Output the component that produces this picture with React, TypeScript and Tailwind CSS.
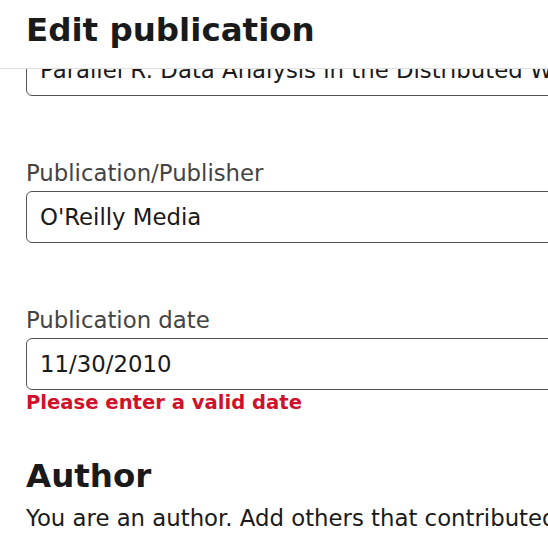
function TextInput({ value }: { value: string }) {
  return (
    <input
      readOnly
      value={value}
      className="box-border block h-[52px] w-[640px] rounded-[6px] border border-[#555] bg-white px-[13px] text-[22.8px] text-[#1a1a1a] outline-none"
    />
  );
}

function Field({
  label,
  value,
  error,
}: {
  label: string;
  value: string;
  error?: string;
}) {
  return (
    <div className="mt-[63px]">
      <label className="mb-[4px] block text-[22.8px] leading-[28px] text-[#444]">
        {label}
      </label>
      <TextInput value={value} />
      {error && (
        <p className="pt-[1px] text-[19.6px] leading-[24px] font-bold text-[#d0112b]">
          {error}
        </p>
      )}
    </div>
  );
}

export default function App() {
  return (
    <div className="relative h-[547px] w-[548px] overflow-hidden bg-white font-['DejaVu_Sans',sans-serif] text-[#1a1a1a]">
      <header className="absolute inset-x-0 top-0 z-10 box-border h-[69px] border-b border-[#e0e0e0] bg-white px-[26px] pt-[10px]">
        <h1 className="text-[32.5px] leading-[40px] font-bold">Edit publication</h1>
      </header>

      <main className="px-[26px] pt-[44px]">
        <TextInput value="Parallel R: Data Analysis in the Distributed World" />
        <Field label="Publication/Publisher" value="O'Reilly Media" />
        <Field
          label="Publication date"
          value="11/30/2010"
          error="Please enter a valid date"
        />

        <h2 className="mt-[41px] text-[32.5px] leading-[40px] font-bold">Author</h2>
        <p className="mt-[6px] whitespace-nowrap text-[22.8px] leading-[33.6px]">
          You are an author. Add others that contributed to this publication.
        </p>
      </main>
    </div>
  );
}
